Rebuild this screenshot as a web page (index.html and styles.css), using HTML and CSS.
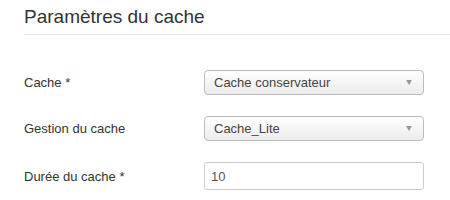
FILE: index.html
```html
<!DOCTYPE html>
<html>
<head>
<meta charset="utf-8">
<link rel="stylesheet" href="styles.css">
</head>
<body>
<div class="panel">
  <h3 class="title">Paramètres du cache</h3>
  <div class="form">
    <div class="row">
      <label class="label">Cache *</label>
      <div class="select"><span>Cache conservateur</span><span class="arrow"></span></div>
    </div>
    <div class="row">
      <label class="label">Gestion du cache</label>
      <div class="select"><span>Cache_Lite</span><span class="arrow"></span></div>
    </div>
    <div class="row">
      <label class="label">Durée du cache *</label>
      <div class="input">10</div>
    </div>
  </div>
</div>
</body>
</html>
```
FILE: styles.css
```css
html, body {
  margin: 0;
  padding: 0;
  background: #fff;
}
body {
  font-family: "Liberation Sans", Arial, sans-serif;
  color: #333;
  width: 450px;
  height: 200px;
  overflow: hidden;
}
.panel {
  padding-left: 24px;
}
.title {
  margin: 0;
  padding-top: 5px;
  height: 29px;
  font-size: 19px;
  font-weight: normal;
  line-height: 24px;
  color: #333;
  border-bottom: 1px solid #e5e5e5;
}
.form {
  padding-top: 35px;
}
.row {
  display: flex;
  align-items: center;
  height: 25px;
  margin-bottom: 21px;
}
.row:last-child {
  height: 28px;
  margin-bottom: 0;
}
.label {
  width: 180px;
  font-size: 13px;
  color: #333;
}
.select {
  box-sizing: border-box;
  width: 220px;
  height: 25px;
  border: 1px solid #bbb;
  border-radius: 4px;
  background: linear-gradient(#ffffff, #ececec);
  display: flex;
  align-items: center;
  justify-content: space-between;
  padding: 0 11px 0 9px;
  font-size: 13px;
  color: #444;
}
.arrow {
  width: 0;
  height: 0;
  border-left: 3px solid transparent;
  border-right: 3px solid transparent;
  border-top: 5px solid #999;
}
.input {
  box-sizing: border-box;
  width: 220px;
  height: 28px;
  border: 1px solid #ccc;
  border-radius: 3px;
  padding: 0 6px;
  display: flex;
  align-items: center;
  font-size: 13px;
  color: #555;
}
```
